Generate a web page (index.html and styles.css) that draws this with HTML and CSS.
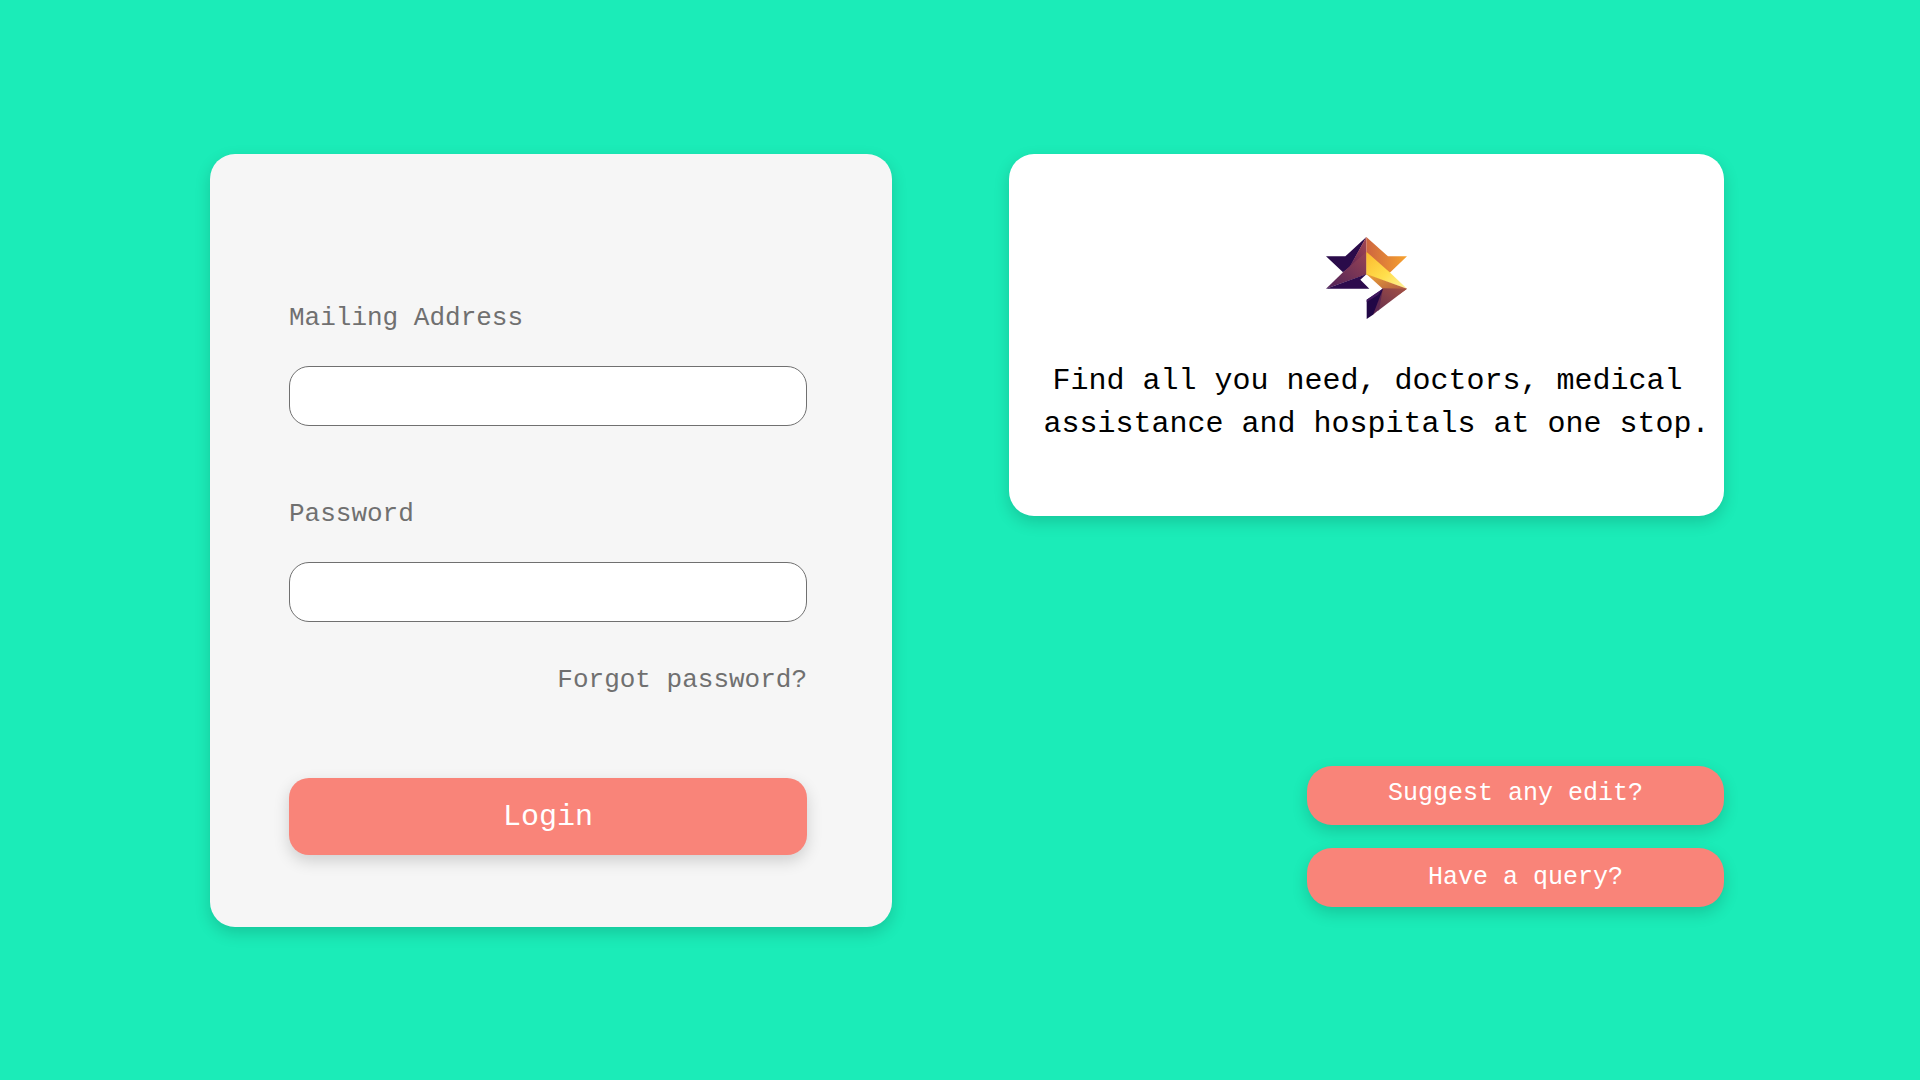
FILE: index.html
```html
<!DOCTYPE html>
<html lang="en">
<head>
<meta charset="utf-8">
<meta name="viewport" content="width=device-width, initial-scale=1">
<title>Login</title>
<link rel="stylesheet" href="styles.css">
</head>
<body>
<main class="page">
  <form class="card login">
    <div class="field">
      <label for="email">Mailing Address</label>
      <input id="email" type="email">
    </div>
    <div class="field">
      <label for="password">Password</label>
      <input id="password" type="password">
    </div>
    <a class="forgot" href="#">Forgot password?</a>
    <button class="button submit" type="submit">Login</button>
  </form>
  <div class="side">
    <section class="card intro">
      <svg class="logo" viewBox="50 50 243 246" aria-hidden="true">
        <defs>
          <linearGradient id="violet" x1="0" y1="1" x2="1" y2="0">
            <stop offset="0" stop-color="#4a1a55"/><stop offset="1" stop-color="#a64953"/>
          </linearGradient>
          <linearGradient id="plum" x1="0" y1="1" x2="1" y2="0">
            <stop offset="0" stop-color="#4e2158"/><stop offset="1" stop-color="#984454"/>
          </linearGradient>
          <linearGradient id="orange" x1="0" y1="0" x2="1" y2="0">
            <stop offset="0" stop-color="#cd6540"/><stop offset="1" stop-color="#f7a22e"/>
          </linearGradient>
          <linearGradient id="gold" x1="0" y1="0" x2="1" y2="1">
            <stop offset="0" stop-color="#fcb92e"/><stop offset=".55" stop-color="#ffdf4c"/><stop offset="1" stop-color="#fff3a0"/>
          </linearGradient>
          <linearGradient id="amber" x1="0" y1="0" x2="1" y2="1">
            <stop offset="0" stop-color="#efa334"/><stop offset="1" stop-color="#a65046"/>
          </linearGradient>
          <linearGradient id="brown" x1="1" y1="0" x2="0" y2="1">
            <stop offset="0" stop-color="#a45044"/><stop offset="1" stop-color="#67304e"/>
          </linearGradient>
        </defs>
        <path fill="#2a0b4a" d="M50 108H108L171 50L122 140L101 156Z"/>
        <path fill="url(#violet)" d="M171 50V100L98 160L122 137Z"/>
        <path fill="url(#plum)" d="M172 94V162L50 205L101 156Z"/>
        <path fill="#2d0b4d" d="M50 205L172 161L153 178L180 205Z"/>
        <path fill="url(#orange)" d="M171 50L236 108H293L243 156L236 160L171 100Z"/>
        <path fill="url(#gold)" d="M171 94L241 156L293 205L171 163Z"/>
        <path fill="url(#amber)" d="M171 161L293 205L270 222L220 205Z"/>
        <path fill="url(#brown)" d="M293 205L206 271L200 238L220 204Z"/>
        <path fill="#5d2851" d="M221 204L195 230L190 284L209 268Z"/>
        <path fill="#210746" d="M221 205L172 238V296L191 283Z"/>
        <path fill="#421960" d="M220 205L172 238V245L206 224Z"/>
      </svg>
      <p class="tagline">Find all you need, doctors, medical&nbsp;<br>assistance and hospitals at one stop.</p>
    </section>
    <div class="actions">
      <button class="button action" type="button">Suggest any edit?</button>
      <button class="button action query" type="button">Have a query?</button>
    </div>
  </div>
</main>
</body>
</html>
```
FILE: styles.css
```css
* {
  box-sizing: border-box;
}

body {
  margin: 0;
  min-height: 100vh;
  background: #1becb8;
  color: #000;
  font-family: "Liberation Mono", "Courier New", monospace;
}

.page {
  display: grid;
  grid-template-columns: 682fr 715fr;
  gap: 117px;
  padding: 154px 196px 100px 210px;
}

.card {
  border-radius: 25px;
  box-shadow: 0 6px 16px rgba(0, 0, 0, 0.16);
}

.login {
  display: flex;
  flex-direction: column;
  padding: 146px 85px 72px 79px;
  background: #f6f6f6;
  color: #707070;
  font-size: 26px;
  line-height: 36px;
}

.field {
  display: flex;
  flex-direction: column;
  gap: 30px;
  margin-bottom: 70px;
}

.field input {
  width: 100%;
  height: 60px;
  padding: 0 20px;
  border: 1px solid #707070;
  border-radius: 20px;
  background: #fff;
  font: inherit;
}

.forgot {
  align-self: flex-end;
  margin-top: -30px;
  color: inherit;
  text-decoration: none;
}

.button {
  border: 0;
  background: #f98479;
  color: #fff;
  font-family: inherit;
  box-shadow: 0 6px 16px rgba(0, 0, 0, 0.16);
  cursor: pointer;
}

.submit {
  height: 77px;
  margin-top: 80px;
  border-radius: 20px;
  font-size: 30px;
}

.side {
  display: flex;
  flex-direction: column;
  justify-content: space-between;
  padding-bottom: 20px;
}

.intro {
  display: flex;
  flex-direction: column;
  align-items: center;
  gap: 41px;
  padding: 83px 0 70px;
  background: #fff;
}

.logo {
  width: 81px;
  height: 82px;
}

.tagline {
  margin: 0;
  padding-left: 20px;
  font-size: 30px;
  line-height: 43px;
  text-align: center;
}

.actions {
  display: flex;
  flex-direction: column;
  align-items: flex-end;
  gap: 23px;
}

.action {
  width: 417px;
  height: 59px;
  padding: 0 0 4px;
  border-radius: 25px;
  font-size: 25px;
}

.query {
  padding: 0 0 0 20px;
}
```
